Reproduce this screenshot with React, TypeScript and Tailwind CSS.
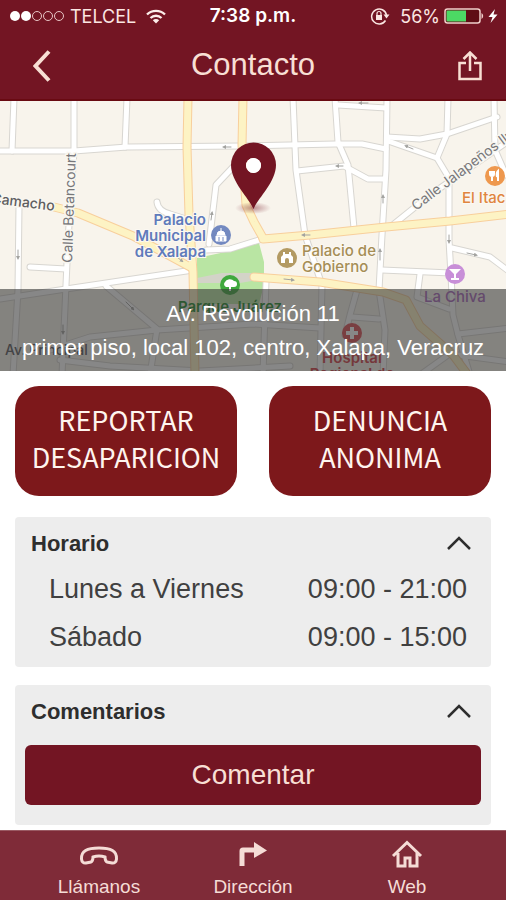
import React, { useState } from 'react';

interface SectionProps {
  title: string;
  children: React.ReactNode;
}

interface TabProps {
  label: string;
  href: string;
  children: React.ReactNode;
}

const schedule = [
  { day: 'Lunes a Viernes', hours: '09:00 - 21:00' },
  { day: 'Sábado', hours: '09:00 - 15:00' },
];

// Street geometry for the static map, in map units
const minorRoads = [
  'M0 151 H74 L127 147 L241 146 L335 144 L362 144 L386 149',
  'M14 98 L12 151',
  'M74 98 V151 L68 240 L62 375',
  'M127 98 L125 147',
  'M19 205 L18 290 L13 375',
  'M30 267 L66 269',
  'M0 299 L66 289 L193 270',
  'M106 286 L157 329 L150 375',
  'M50 350 L90 337 L157 330 L253 324 L320 328',
  'M60 360 L110 366 L200 371 L290 366',
  'M157 202 Q158 211 170 214 L186 219',
  'M209 244 L216 185 L233 167',
  'M206 250 L230 249 L259 240',
  'M293 98 L296 170 L305 235 L322 285 L320 375',
  'M335 98 L338 142 L348 165 L354 228',
  'M297 171 L344 166 L368 179 H384',
  'M338 105 L386 108',
  'M387 98 L386 170 L382 235 L379 290 L385 330 L383 375',
  'M387 137 L420 139 L447 134 L497 117',
  'M388 141 L437 158 L449 178 L449 240 L451 275 L453 315 L458 335 L470 375',
  'M448 98 L447 134 L437 158',
  'M494 98 L495 150 L506 175',
  'M394 224 L430 195 L510 140',
  'M382 270 L451 273',
  'M420 274 L417 297 L449 309',
  'M452 248 L490 257 L510 272',
  'M458 334 L510 328',
  'M458 355 L510 362',
  'M357 290 L350 315 L345 335',
  'M352 317 L379 319',
  'M420 375 L448 355',
  'M266 281 L263 375',
];

const mainRoads = [
  'M188 98 L187 147 L189 215 L193 272 L195 375',
  'M243 98 L242 145 L246 205 L254 222 L263 238',
  'M54 207 L78 213 L133 236 L192 268',
  'M263 239 L310 235 L386 227 L450 221 L510 214',
  'M254 277 L320 282 L383 292 L406 300 L420 326 L453 355 L468 375',
];

const oneWayArrows = [
  'M368 103 h-8',
  'M231 147 h-7',
  'M413 149 l-7 -3',
  'M343 166 h-6',
  'M383 203 v-7',
  'M310 235 h-7',
  'M284 279 l9 1',
  'M380 260 v-10',
  'M467 253 l9 2',
  'M211 220 l1 -7',
  'M18 250 v8',
  'M126 302 l7 7',
  'M63 325 v8',
  'M449 235 v7',
  'M177 257 l5 4',
];

const CityMap: React.FC = () => (
  <svg
    viewBox="0 101 506 270"
    preserveAspectRatio="xMidYMid slice"
    className="block h-[270px] w-full bg-[#f8f4ec] font-[Inter,'Liberation_Sans',sans-serif]"
    role="img"
    aria-label="Mapa del centro de Xalapa"
  >
    <defs>
      <marker id="arrow" viewBox="0 0 6 6" refX="3" refY="3" markerWidth="4" markerHeight="4" orient="auto">
        <path d="M0 0 L6 3 L0 6 Z" fill="#a3a3a0" />
      </marker>
      <radialGradient id="pinShadow">
        <stop offset="0" stopColor="#731523" stopOpacity="0.45" />
        <stop offset="1" stopColor="#731523" stopOpacity="0" />
      </radialGradient>
    </defs>

    {/* Park */}
    <path d="M197 258 L230 251 L259 243 L264 262 V285 L259 304 H197 Z" fill="#b9e5a3" />
    <path d="M197 278 L222 273 H264 V279 L240 283 L197 283 Z" fill="#d3d3c8" />

    {/* Streets */}
    <g fill="none" strokeLinecap="round" strokeLinejoin="round">
      {minorRoads.map((d) => (
        <path key={d} d={d} stroke="#d8d6d1" strokeWidth="7" />
      ))}
      {minorRoads.map((d) => (
        <path key={d} d={d} stroke="#ffffff" strokeWidth="5" />
      ))}
      {mainRoads.map((d) => (
        <path key={d} d={d} stroke="#f8cf9c" strokeWidth="9" />
      ))}
      {mainRoads.map((d) => (
        <path key={d} d={d} stroke="#fdf3c4" strokeWidth="7" />
      ))}
      {oneWayArrows.map((d) => (
        <path key={d} d={d} stroke="#a3a3a0" strokeWidth="1" markerEnd="url(#arrow)" />
      ))}
    </g>

    {/* Street names */}
    <g fontSize="14" fill="#77777a" stroke="#f8f6f0" strokeWidth="3" paintOrder="stroke">
      <text transform="translate(72 263) rotate(-88)">Calle Betancourt</text>
      <text transform="translate(416 211) rotate(-37)">Calle Jalapeños Ilustres</text>
      <text transform="translate(-9 203) rotate(7)" fontWeight="500" fill="#5e5e60">Camacho</text>
      <text x="5" y="355" fontWeight="500" fill="#55555a" stroke="none">Av. Principal</text>
    </g>

    {/* Places */}
    <g fontSize="15" fontWeight="600" stroke="#fbf8f2" strokeWidth="2" paintOrder="stroke">
      <g fill="#5f7bbb" textAnchor="end">
        <text x="206" y="225">Palacio</text>
        <text x="206" y="241">Municipal</text>
        <text x="206" y="257">de Xalapa</text>
      </g>
      <g fill="#a58d55" fontWeight="500">
        <text x="302" y="256">Palacio de</text>
        <text x="302" y="272">Gobierno</text>
      </g>
      <text x="462" y="203" fill="#e0853f" fontWeight="500">El Itacate</text>
      <text x="424" y="302" fill="#a766bb" fontWeight="500" stroke="none">La Chiva</text>
      <text x="230" y="312" fill="#1f8a2b" stroke="none" textAnchor="middle">Parque Juárez</text>
      <g fill="#d13a42" stroke="none" textAnchor="middle">
        <text x="352" y="363">Hospital</text>
        <text x="352" y="379">Regional de</text>
      </g>
    </g>

    <g>
      <circle cx="221" cy="235" r="10" fill="#7389c0" />
      <path d="M221 228 v3 M217 235 a4 4 0 0 1 8 0 Z M216 236 h10 v5 h-10 Z" fill="#fff" stroke="#fff" strokeWidth="1" />
      <path d="M219 237 v4 M223 237 v4" stroke="#7389c0" strokeWidth="1" />
      <circle cx="287" cy="258" r="10" fill="#b39a62" />
      <path d="M281 263 V257 L283 255 V252 h2 v2 h4 v-2 h2 v3 l2 2 v6 h-4 v-3 a2 2 0 0 0 -4 0 v3 Z" fill="#fff" />
      <circle cx="230" cy="285" r="10" fill="#3fa83d" />
      <path d="M229 291 v-4 h-3 a3 3 0 0 1 -1 -5 a5 4 0 0 1 9 -1 a3 3 0 0 1 0 6 h-3 v4 Z" fill="#fff" />
      <circle cx="495" cy="176" r="10" fill="#ee984e" />
      <path d="M490 171 v3 q0 2 2 2 q2 0 2 -2 v-3 M492 171 v10 M498 181 v-10 q-2 2 -1 6" fill="none" stroke="#fff" strokeWidth="2" />
      <circle cx="455" cy="274" r="10" fill="#c88fd8" />
      <path d="M449 269 h12 l-5 5 v4 h3 v2 h-8 v-2 h3 v-4 Z" fill="#fff" />
      <circle cx="352" cy="333" r="10" fill="#dd4b52" />
      <path d="M352 327 v12 M346 333 h12" stroke="#fff" strokeWidth="4" />
    </g>

    {/* Location pin */}
    <ellipse cx="253" cy="208" rx="18" ry="6" fill="url(#pinShadow)" />
    <path
      d="M253.500 209 C249 198 231 182 231 165 A22.500 22.500 0 0 1 276 165 C276 182 258 198 253.500 209 Z M253.500 158 a7.500 7.500 0 1 0 0 15 a7.500 7.500 0 0 0 0 -15 Z"
      fill="#731523"
    />
    <circle cx="253.500" cy="165.500" r="7.500" fill="#fff" />
  </svg>
);

const Section: React.FC<SectionProps> = ({ title, children }) => {
  const [open, setOpen] = useState(true);

  return (
    <section className="rounded-sm bg-[#ededed] px-2.5">
      <button
        type="button"
        aria-expanded={open}
        onClick={() => setOpen(!open)}
        className="flex h-12 w-full items-center justify-between pt-1 pr-2.5 pl-1.5"
      >
        <span className="text-[22px] font-bold text-[#2e2e2e]">{title}</span>
        <svg viewBox="0 0 24 14" className={open ? 'h-3.5 w-6' : 'h-3.5 w-6 rotate-180'} aria-hidden="true">
          <path d="M1 13 L12 2 L23 13" fill="none" stroke="#2e2e2e" strokeWidth="2.500" />
        </svg>
      </button>
      {open && children}
    </section>
  );
};

const Tab: React.FC<TabProps> = ({ label, href, children }) => (
  <a href={href} className="flex w-[154px] flex-col items-center">
    <svg viewBox="0 0 40 32" className="h-8 w-10" aria-hidden="true">
      {children}
    </svg>
    <span className="mt-1 text-[19px] leading-6">{label}</span>
  </a>
);

const StatusBar: React.FC = () => (
  <div className="grid h-8 grid-cols-[1fr_auto_1fr] items-center px-2 font-[Inter,'Liberation_Sans',sans-serif] text-[18px] text-[#fbe6e2]">
    <div className="flex items-center gap-1.5">
      <svg viewBox="0 0 56 12" className="h-3 w-14" aria-hidden="true">
        <circle cx="7" cy="6" r="5" fill="#fff" />
        <circle cx="18" cy="6" r="5" fill="#fff" />
        <g fill="none" stroke="#e9c6c6" strokeWidth="1">
          <circle cx="29" cy="6" r="4.500" />
          <circle cx="40" cy="6" r="4.500" />
          <circle cx="51" cy="6" r="4.500" />
        </g>
      </svg>
      <span>TELCEL</span>
      <svg viewBox="0 0 20 15" className="ml-1 h-[15px] w-5" aria-hidden="true">
        <g fill="none" stroke="#fdeeea" strokeWidth="2.400">
          <path d="M1 5.500 a13 13 0 0 1 18 0" />
          <path d="M4.500 9 a8 8 0 0 1 11 0" />
        </g>
        <path d="M10 14.500 L6.800 11.300 a4.600 4.600 0 0 1 6.400 0 Z" fill="#fdeeea" />
      </svg>
    </div>
    <time className="text-[19px] font-semibold text-white">7:38 p.m.</time>
    <div className="flex items-center justify-end gap-1">
      <svg viewBox="0 0 20 18" className="mr-1.5 h-[18px] w-5" aria-hidden="true">
        <path d="M15.500 13.500 A7.500 7.500 0 1 1 16.500 8" fill="none" stroke="#fbe6e2" strokeWidth="1.500" />
        <path d="M13.500 7.500 h6 l-3 4 Z" fill="#fbe6e2" />
        <rect x="6" y="8" width="6" height="5" fill="#fbe6e2" />
        <path d="M7 8 V6.500 a2 2 0 0 1 4 0 V8" fill="none" stroke="#fbe6e2" strokeWidth="1.200" />
      </svg>
      <span>56%</span>
      <svg viewBox="0 0 40 16" className="h-4 w-10" aria-hidden="true">
        <rect x="1" y="1" width="35" height="14" rx="2.500" fill="#5f0d15" stroke="#f0cfcb" strokeWidth="1.500" />
        <path d="M3.500 2.500 H22 V13.500 H3.500 a1 1 0 0 1 -1 -1 V3.500 a1 1 0 0 1 1 -1 Z" fill="#4cd964" />
        <path d="M37.500 5 a3.500 3.500 0 0 1 0 6 Z" fill="#f0cfcb" />
      </svg>
      <svg viewBox="0 0 10 14" className="h-3.5 w-2.5" aria-hidden="true">
        <path d="M7 0 L0.500 8 H4.500 L2.500 14 L9.500 5.500 H5.500 Z" fill="#fff" />
      </svg>
    </div>
  </div>
);

const App: React.FC = () => {
  return (
    <div className="flex min-h-screen flex-col bg-white font-['Liberation_Sans',Arial,sans-serif]">
      <header className="border-b-2 border-[#690a12] bg-[#731523] text-[#f8dfd4]">
        <StatusBar />
        <div className="grid h-[67px] grid-cols-[1fr_auto_1fr] items-center px-6">
          <button type="button" aria-label="Regresar" className="flex h-10 w-9 items-center justify-center justify-self-start">
            <svg viewBox="0 0 18 32" className="h-8 w-[18px]" aria-hidden="true">
              <path d="M16 1.500 L2.500 16 L16 30.500" fill="none" stroke="currentColor" strokeWidth="4" />
            </svg>
          </button>
          <h1 className="text-[31px]">Contacto</h1>
          <button type="button" aria-label="Compartir" className="flex h-10 w-6 items-center justify-center justify-self-end">
            <svg viewBox="0 0 24 30" className="h-[30px] w-6" aria-hidden="true">
              <g fill="none" stroke="currentColor" strokeWidth="2.500">
                <path d="M8 12 H1.500 V28 H22.500 V12 H16" />
                <path d="M12 20 V2 M5.500 8 L12 1.500 L18.500 8" />
              </g>
            </svg>
          </button>
        </div>
      </header>

      <main className="flex-1">
        {/* Map with address */}
        <div className="relative">
          <CityMap />
          <address className="absolute inset-x-0 bottom-0 h-[82px] bg-[#373737]/60 pt-2 text-center text-[22px] leading-[34px] text-white not-italic">
            Av. Revolución 11
            <br />
            primer piso, local 102, centro, Xalapa, Veracruz
          </address>
        </div>

        <div className="space-y-[18px] px-[15px] pt-[15px]">
          {/* Report buttons */}
          <div className="mb-[21px] grid grid-cols-2 gap-8 font-['Noto_Sans_CJK_SC','Noto_Sans',sans-serif] text-[27px] leading-[37px] text-[#fff4ee]">
            <button type="button" className="h-[110px] rounded-3xl bg-[#7d181b] pb-1.5 whitespace-nowrap">
              REPORTAR
              <br />
              DESAPARICION
            </button>
            <button type="button" className="h-[110px] rounded-3xl bg-[#7d181b] pb-1.5 whitespace-nowrap">
              DENUNCIA
              <br />
              ANONIMA
            </button>
          </div>

          <Section title="Horario">
            <table className="w-full text-[27px] leading-[48px] text-[#404040]">
              <tbody>
                {schedule.map(({ day, hours }) => (
                  <tr key={day}>
                    <th scope="row" className="pl-6 text-left font-normal">{day}</th>
                    <td className="pr-3.5 text-right">{hours}</td>
                  </tr>
                ))}
              </tbody>
            </table>
            <div className="h-1.5" />
          </Section>

          <Section title="Comentarios">
            <div className="pt-3 pb-5">
              <button type="button" className="h-[60px] w-full rounded-md bg-[#731523] text-[28px] text-[#f8dfd4]">
                Comentar
              </button>
            </div>
          </Section>
        </div>
      </main>

      <nav className="mt-[5px] flex h-[70px] justify-center border-t border-[#9a5a63] bg-[#7f2b38] pt-2 text-[#f5dcd6]">
        <Tab label="Llámanos" href="#llamanos">
          <path
            d="M2.500 20 C2 12 8 9 20 9 C32 9 38 12 37.500 20 Q37 24.500 33 24 L28 23 Q26 22 26 18 Q20 16 14 18 Q14 22 12 23 L7 24 Q3 24.500 2.500 20 Z"
            fill="none"
            stroke="currentColor"
            strokeWidth="3"
          />
        </Tab>
        <Tab label="Dirección" href="#direccion">
          <path d="M9 27 V12 Q9 11 10 11 H22" fill="none" stroke="currentColor" strokeWidth="5" />
          <path d="M21 3 L34 11.500 L21 19 Z" fill="currentColor" />
        </Tab>
        <Tab label="Web" href="#web">
          <path
            d="M6 17 L20 3.500 L34 17 M11 14 V27 H18 V19 H23 V27 H30 V14"
            fill="none"
            stroke="currentColor"
            strokeWidth="3"
          />
        </Tab>
      </nav>
    </div>
  );
};

export default App;
